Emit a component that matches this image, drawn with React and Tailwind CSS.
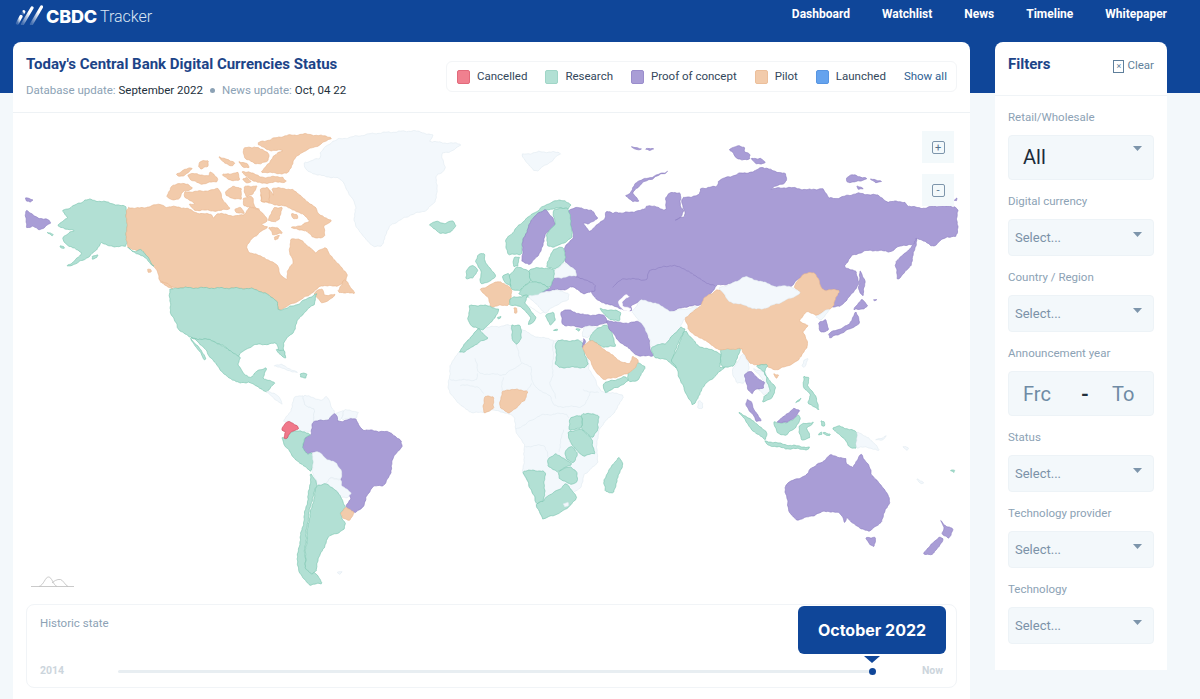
import React from 'react';

const font = { fontFamily: 'Roboto, "Noto Sans", sans-serif' };

const colors = {
  research: ['#b2e0d4', '#7cc6b0'],
  pilot: ['#f2cbab', '#e9b78f'],
  poc: ['#a99dd6', '#8e81c3'],
  none: ['#f3f8fc', '#e3ebf2'],
  cancelled: ['#f0788a', '#cf4a60'],
  white: ['#ffffff', '#ffffff'],
};

// every block uses the pixel grid of a 3x crop of the map, hence the offset per group
const america = [
  ['research', '320,262 270,248 200,238 150,262 125,272 145,295 112,315 140,330 165,330 128,352 140,375 190,400 135,443 190,420 225,395 245,368 265,378 320,380'],
  ['research', '118,380 130,378 132,385 120,385'],
  ['research', '80,335 100,345 95,348'],
  ['research', '215,410 232,406 230,415 215,418'],
  ['poc', '18,270 50,292 85,300 95,310 80,318 60,330 40,320 18,322'],
  ['poc', '18,233 38,238 30,245 18,245'],
  ['pilot', '320,262 365,265 395,258 425,252 440,262 470,260 510,268 530,278 575,285 580,295 590,280 625,285 650,288 672,285 690,262 720,270 745,300 725,315 745,320 700,350 680,380 690,400 730,410 770,435 785,470 800,478 805,450 820,430 810,400 810,355 845,362 875,385 885,400 915,380 950,430 982,460 975,485 945,500 905,495 880,515 850,535 800,560 775,572 770,545 740,520 690,505 450,503 440,495 420,478 410,450 385,415 350,390 320,380'],
  ['pilot', '970,480 985,490 1005,522 955,515'],
  ['pilot', '880,520 905,505 915,525 950,525 905,552 895,535'],
  ['pilot', '420,482 440,490 460,510 440,500'],
  ['pilot', '382,450 392,448 392,458 384,458'],
  ['research', '320,380 345,395 365,390 385,415 405,440 380,418 350,400'],
  ['pilot', '720,225 745,205 760,225 755,205 790,205 820,210 850,235 885,260 895,285 938,300 910,320 915,350 880,355 855,330 812,325 845,315 870,305 850,285 825,270 790,258 775,255 750,250 725,245'],
  ['pilot', '760,262 785,262 780,295 765,308 745,300'],
  ['pilot', '745,320 770,325 790,340 760,345'],
  ['pilot', '765,350 780,348 775,358 765,358'],
  ['pilot', '815,280 832,282 832,295 818,295'],
  ['pilot', '715,68 790,48 860,42 938,52 900,75 850,95 820,120 805,160 765,160 722,155 750,130 760,105 790,92 745,90 715,75'],
  ['pilot', '670,85 710,80 745,100 745,125 705,132 675,115'],
  ['pilot', '595,112 620,115 645,130 635,138 610,125'],
  ['pilot', '655,125 678,128 690,142 665,140'],
  ['pilot', '538,125 565,122 565,140 545,147 535,138'],
  ['pilot', '470,165 490,148 518,145 505,160 480,170'],
  ['pilot', '505,165 530,160 565,170 570,155 595,175 590,185 540,192 510,180'],
  ['pilot', '605,165 655,157 660,180 630,180'],
  ['pilot', '668,178 680,172 692,185 675,190'],
  ['pilot', '665,155 690,155 720,172 790,170 800,185 720,190 695,180'],
  ['pilot', '615,215 640,198 665,205 665,235 640,238 620,225'],
  ['pilot', '672,200 715,197 695,225 678,232'],
  ['pilot', '440,230 455,195 500,190 520,205 490,215 480,235 455,240'],
  ['pilot', '495,215 530,215 580,210 595,205 610,240 630,265 600,272 575,272 525,270 505,255 525,250 495,235'],
  ['pilot', '645,268 665,262 675,280 650,280'],
  ['pilot', '668,235 695,230 705,262 720,268 690,262 670,255'],
  ['pilot', '720,210 745,200 750,248 725,245'],
  ['none', '850,128 900,115 900,95 945,60 1060,40 1180,32 1240,45 1230,65 1325,72 1300,92 1265,100 1275,150 1250,165 1250,240 1220,270 1170,285 1110,315 1085,380 1060,378 1020,340 1000,300 1010,260 985,215 960,175 890,165 860,150'],
  ['research', '1228,312 1250,305 1270,310 1295,303 1310,320 1295,335 1260,342 1240,325'],
  ['research', '450,503 690,505 740,520 770,545 775,572 830,555 890,520 885,550 860,570 835,595 825,630 790,665 795,710 780,700 770,670 700,675 660,700 650,712 615,680 575,660 510,655 475,625 450,570'],
];

const south = [
  ['research', '-120,-36 -55,-30 -20,-10 30,21 25,40 40,70 65,85 80,60 110,55 100,85 135,100 125,110 110,125 85,115 60,95 30,100 0,85 -30,60 -60,20 -80,-10 -100,-30'],
  ['research', '-120,-36 -95,-10 -70,25 -75,28 -100,-5'],
  ['research', '140,0 165,0 165,25 150,15'],
  ['none', '130,45 160,45 205,68 170,60'],
  ['research', '210,72 230,70 230,85 212,83'],
  ['none', '110,120 140,135 160,165 135,150'],
  ['none', '160,215 185,175 195,140 220,135 225,165 255,180 250,215 245,245 215,245 185,215'],
  ['none', '220,135 275,150 290,140 315,190 290,210 250,215 255,180 225,165'],
  ['none', '315,190 340,180 335,205 320,215'],
  ['none', '340,180 385,185 380,205 335,207'],
  ['poc', '245,215 290,210 315,190 325,215 380,205 385,225 400,240 470,245 515,270 515,290 490,320 480,375 465,405 430,410 408,440 400,470 375,490 345,470 365,445 335,410 335,370 320,340 285,325 270,305 230,310 215,290 225,265 245,255'],
  ['research', '155,262 170,265 182,248 205,240 245,255 225,265 215,290 232,310 250,310 245,365 215,345 190,320 165,285'],
  ['cancelled', '165,222 180,215 200,225 205,235 180,248 170,265 160,262 165,245 155,238'],
  ['none', '248,310 270,305 285,325 320,340 335,370 335,390 300,380 290,402 262,405 248,365'],
  ['none', '290,402 300,382 335,392 335,410 365,430 355,445 335,440 315,420'],
  ['research', '243,368 262,405 245,450 232,520 225,600 225,650 255,670 280,700 240,705 215,680 200,640 210,570 225,490 238,420'],
  ['research', '262,405 290,402 315,420 335,440 345,470 330,490 345,520 340,540 295,560 285,590 265,620 260,660 245,675 225,650 228,590 235,520 250,450'],
  ['pilot', '345,470 375,490 360,510 340,505 332,490'],
  ['none', '320,665 338,665 330,672'],
  ['none', '685,5 660,50 655,125 690,165 730,190 800,180 855,200 855,240 885,290 878,365 905,420 925,480 940,505 1000,480 1030,430 1055,410 1060,375 1105,340 1100,310 1105,240 1150,190 1185,135 1115,125 1105,110 1075,52 1075,-28 978,-28 920,-40 845,-75 745,-65'],
  ['pilot', '762,140 790,140 792,178 765,188 760,170'],
  ['pilot', '815,125 835,118 895,122 885,150 860,170 835,192 810,170'],
  ['research', '1055,190 1105,195 1105,240 1085,262 1055,235'],
  ['research', '1020,205 1055,195 1055,235 1015,240'],
  ['research', '1015,245 1055,238 1085,265 1095,310 1060,318 1020,280'],
  ['research', '955,325 975,312 1005,325 1025,340 985,365 955,350'],
  ['research', '1005,300 1025,290 1045,310 1030,340 1010,325'],
  ['research', '985,365 1020,348 1042,365 1040,395 1020,405 990,385'],
  ['research', '878,362 945,362 942,455 920,460 905,420'],
  ['research', '942,455 948,440 985,420 1005,400 1030,425 1040,445 1000,485 940,508 925,480 920,460'],
  ['none', '998,462 1012,456 1015,465 1003,472'],
  ['research', '1168,320 1178,345 1160,395 1150,428 1125,425 1122,395 1135,360'],
  ['research', '1120,100 1190,80 1195,95 1125,128'],
  ['research', '1195,68 1215,35 1248,50 1225,90 1195,95'],
];

const borders = [
  '735,25 745,70 820,75 875,40 905,50 905,100 960,140 975,170 1060,170 1085,120',
  '660,90 740,90 745,70',
  '690,105 745,110 765,135',
  '815,125 820,75',
  '905,100 890,125',
  '970,-28 968,70 960,100 980,150',
  '855,240 930,195 1010,190 1020,205',
  '885,290 945,285 955,325',
  '1000,240 985,310',
  '1060,120 1110,130',
  '875,40 840,-70',
  '1230,-150 1270,-120 1330,-130',
  '1270,-120 1260,-70 1310,-20',
  '895,-130 930,-110 960,-120',
];

const eurasia = [
  ['poc', '385,240 420,232 460,245 475,268 445,280 430,280 445,305 470,285 495,265 500,245 520,250 530,245 545,250 610,240 620,225 680,240 675,205 695,185 720,190 722,225 730,240 720,265 705,272 735,255 725,205 780,195 780,175 830,170 835,150 900,130 945,125 960,110 1000,122 1035,130 1040,155 990,178 1040,172 1110,180 1150,175 1165,205 1190,205 1250,190 1310,195 1340,215 1395,215 1405,230 1460,235 1480,228 1552,230 1552,320 1520,320 1480,350 1430,322 1420,345 1385,345 1350,365 1290,360 1240,375 1210,410 1250,425 1255,460 1240,490 1200,530 1175,530 1200,480 1150,480 1115,430 1085,440 1050,470 1010,470 965,455 915,440 880,460 835,465 830,470 780,525 735,530 690,545 650,520 600,510 570,530 575,545 555,540 525,530 470,510 455,490 465,465 410,440 405,418 375,395 375,350 400,325 395,290'],
  ['white', '556,495 568,500 548,515 548,528 572,538 566,545 548,538 535,515'],
  ['poc', '1365,400 1420,345 1430,322 1425,360 1410,410 1375,450'],
  ['poc', '690,122 640,140 590,155 570,190 555,195 580,215 600,215 575,190 605,160'],
  ['none', '240,75 300,65 365,68 340,90 285,125'],
  ['poc', '575,52 605,55 590,60'],
  ['poc', '615,57 640,57 630,63'],
  ['poc', '868,60 895,45 915,55 910,65 930,75 930,90 885,85 880,70'],
  ['poc', '935,85 965,85 975,100 945,100'],
  ['poc', '1220,140 1240,135 1285,145 1240,158 1222,155'],
  ['poc', '1290,148 1325,152 1305,158'],
  ['poc', '1248,170 1270,175 1255,180'],
  ['poc', '1545,210 1552,205 1552,214'],
  ['poc', '340,445 408,437 465,465 465,485 430,490 395,470 370,480 330,480 285,500 305,480 330,475'],
  ['none', '345,420 375,400 405,418 408,437 340,445'],
  ['research', '195,330 215,310 260,265 300,235 335,215 370,210 395,225 385,235 340,235 320,240 290,250 265,290 250,330 243,372 205,375'],
  ['poc', '245,390 250,330 265,290 290,250 320,240 340,265 345,290 318,310 300,370 270,405'],
  ['research', '340,240 385,232 395,290 395,325 345,352 320,345 322,310 345,285'],
  ['research', '320,400 340,360 372,350 375,395 345,418 320,412'],
  ['research', '220,385 238,380 235,410 222,410'],
  ['research', '205,435 232,412 265,420 275,450 240,480 215,480'],
  ['research', '265,420 300,412 345,420 340,445 330,472 275,455'],
  ['research', '240,480 275,452 330,472 305,490 270,505 235,490'],
  ['research', '185,440 205,430 215,470 195,460'],
  ['pilot', '118,478 150,465 175,452 215,475 210,515 205,525 150,530 145,500'],
  ['pilot', '222,535 230,535 228,550 222,548'],
  ['research', '88,525 150,528 180,540 150,580 125,600 95,590 85,570'],
  ['research', '172,560 182,560 180,565 172,564'],
  ['research', '210,505 265,495 255,520 290,565 280,575 262,585 275,560 240,530 210,525'],
  ['research', '115,375 135,370 135,400 170,435 150,455 120,460 125,430 108,395'],
  ['research', '78,420 100,405 112,420 100,445 78,445'],
  ['none', '265,500 305,490 345,480 385,490 385,510 340,530 320,550 295,530'],
  ['research', '315,555 340,548 345,575 330,585'],
  ['research', '340,600 355,600 350,604'],
  ['research', '405,598 420,596 415,604'],
  ['research', '55,665 95,620 115,595 145,625 110,640 75,665'],
  ['research', '215,585 240,585 245,625 230,645 215,625'],
  ['research', '348,632 425,632 445,712 348,712'],
  ['poc', '360,545 385,540 430,555 490,555 505,580 420,592 370,585'],
  ['research', '478,535 540,545 540,575 505,565'],
  ['none', '430,590 480,590 445,622 428,618'],
  ['research', '445,630 470,595 505,585 530,650 490,650'],
  ['poc', '425,652 432,625 436,628 430,652'],
  ['pilot', '425,650 450,630 485,650 540,695 570,700 580,680 595,690 585,715 555,735 490,750 465,720'],
  ['poc', '500,570 545,580 600,575 620,600 630,650 640,680 590,675 545,640 510,600'],
  ['none', '575,545 600,510 650,520 690,545 775,530 740,560 720,590 680,640 635,650 620,600 600,575'],
  ['research', '635,650 680,640 720,590 735,600 700,670 710,715 680,690 640,680'],
  ['research', '735,600 770,645 840,670 845,690 838,715 860,705 790,770 765,820 755,822 725,760 710,715 695,690 710,660'],
  ['research', '840,650 905,655 880,710 845,710'],
  ['pilot', '735,565 780,530 790,505 835,478 870,515 960,540 1030,515 1085,490 1060,470 1090,432 1125,428 1150,480 1198,480 1180,530 1130,555 1100,545 1075,575 1105,585 1090,605 1105,650 1070,695 1010,720 965,705 925,700 905,655 840,660 790,630 745,600'],
  ['pilot', '1000,730 1018,735 1010,745'],
  ['none', '835,475 880,460 915,440 965,455 1010,470 1050,468 1085,490 1030,515 960,540 870,515'],
  ['none', '1125,560 1170,535 1145,570'],
  ['poc', '1138,575 1160,570 1165,600 1140,607'],
  ['poc', '1240,540 1265,505 1285,530 1262,538'],
  ['poc', '1250,545 1258,580 1225,600 1170,625 1165,610 1225,585'],
  ['poc', '1262,420 1275,460 1270,500 1255,475'],
  ['poc', '1300,508 1310,508 1305,512'],
];

const kazakh = '520,470 550,445 620,450 630,420 700,405 750,425 790,455 830,468';

const pacific = [
  ['none', '275,90 310,40 330,85 310,130 290,130'],
  ['none', '340,85 375,95 390,150 370,165 355,150 375,125'],
  ['research', '350,75 385,75 370,100 405,140 400,170 370,188 372,170 390,150 375,100'],
  ['poc', '315,100 335,95 350,115 375,125 370,145 345,150 335,160 325,145 315,120'],
  ['poc', '320,180 335,185 345,215 365,240 350,245 330,215 318,195'],
  ['none', '175,182 190,190 188,208 175,205'],
  ['none', '490,60 502,55 495,80 487,78'],
  ['research', '490,110 505,112 505,140 525,165 535,190 535,210 505,190 510,165 490,140'],
  ['research', '465,190 483,172 475,185'],
  ['research', '295,212 340,245 380,275 378,300 345,280'],
  ['research', '375,302 440,315 510,322 505,328 430,325 385,315'],
  ['research', '402,245 440,250 475,225 480,240 465,265 440,285 415,280 402,260'],
  ['poc', '410,245 440,225 460,205 480,213 472,225 440,248'],
  ['research', '480,255 525,245 500,265 510,295 485,300 478,280'],
  ['research', '545,242 555,245 552,260 545,258'],
  ['research', '535,280 545,278 545,284 536,285'],
  ['research', '550,278 572,282 570,287 552,284'],
  ['research', '575,265 600,258 650,275 650,325 630,320 600,285'],
  ['none', '650,275 690,295 720,335 680,320 650,325'],
  ['none', '705,300 742,288 730,298'],
  ['none', '790,318 808,325 800,332'],
  ['none', '830,415 852,430 845,434'],
  ['research', '932,393 945,390 942,398'],
  ['poc', '437,430 500,405 510,385 550,365 570,345 615,355 620,372 640,385 660,340 685,375 695,405 745,460 748,490 720,550 690,572 660,568 620,530 615,550 600,520 560,512 510,530 470,540 450,525 437,460'],
  ['poc', '678,592 708,592 700,618 688,615'],
  ['poc', '900,540 915,555 940,565 925,595 905,585 915,565'],
  ['poc', '895,590 910,598 880,645 850,640'],
];

// rough the straight edges up a little: same place, same shift, so neighbours stay joined
const warp = (x, y) => [
  x + 1.6 * Math.sin(y * 0.11 + x * 0.04) + 0.8 * Math.sin(y * 0.37 - x * 0.19),
  y + 1.6 * Math.sin(x * 0.13 - y * 0.05) + 0.8 * Math.sin(x * 0.41 + y * 0.17),
];

const toPath = (points, x0, y0, closed) => {
  const pts = points.split(' ').map((p) => p.split(',').map(Number));
  // take the corners off, barely
  const cut = [];
  const n = pts.length;
  pts.forEach((p, i) => {
    const next = pts[(i + 1) % n];
    if (!closed && i === n - 1) {
      cut.push(p);
      return;
    }
    if (!closed && i === 0) cut.push(p);
    cut.push([p[0] + (next[0] - p[0]) * 0.1, p[1] + (next[1] - p[1]) * 0.1]);
    cut.push([p[0] + (next[0] - p[0]) * 0.9, p[1] + (next[1] - p[1]) * 0.9]);
  });
  let d = '';
  cut.forEach((p, i) => {
    const next = i < cut.length - 1 ? cut[i + 1] : closed ? cut[0] : null;
    if (!next) return;
    const steps = Math.max(1, Math.round(Math.hypot(next[0] - p[0], next[1] - p[1]) / 4));
    for (let s = 0; s < steps; s++) {
      const px = p[0] + ((next[0] - p[0]) * s) / steps;
      const py = p[1] + ((next[1] - p[1]) * s) / steps;
      const [wx, wy] = warp(px + x0 * 3, py + y0 * 3);
      d += `${d ? 'L' : 'M'}${(wx - x0 * 3).toFixed(1)} ${(wy - y0 * 3).toFixed(1)}`;
    }
  });
  return closed ? `${d}Z` : d;
};

const Land = ({ shapes, x, y }) => (
  <g transform={`translate(${x} ${y}) scale(0.3333)`} strokeWidth="2" strokeLinejoin="round">
    {shapes.map(([kind, points], i) => (
      <path key={i} d={toPath(points, x, y, true)} fill={colors[kind][0]} stroke={colors[kind][1]} />
    ))}
  </g>
);

const Lines = ({ lines, x, y, stroke }) => (
  <g transform={`translate(${x} ${y}) scale(0.3333)`} fill="none" stroke={stroke} strokeWidth="2">
    {lines.map((points, i) => <path key={i} d={toPath(points, x, y, false)} />)}
  </g>
);

const WorldMap = () => (
  <svg viewBox="13 113 957 491" className="block w-[957px] h-[491px]">
    <Land shapes={america} x={20} y={120} />
    <Land shapes={south} x={230} y={350} />
    <Lines lines={borders} x={230} y={350} stroke="#e3ebf2" />
    <Land shapes={eurasia} x={440} y={130} />
    <Lines lines={[kazakh]} x={440} y={130} stroke="#8e81c3" />
    <Land shapes={pacific} x={640} y={340} />
    {/* small chart mark */}
    <g fill="none" stroke="#bdbdbd" strokeWidth="0.8">
      <path d="M31 586.5H74" />
      <path d="M39 586.5C44 585 45 577 48.5 577C52 577 53 585 57 586.5" />
      <path d="M52 583C54 581 57 579 60.5 579.5C63 580 65 585 68 586.5" />
    </g>
  </svg>
);

const Caret = () => (
  <svg viewBox="0 0 9 5" className="w-[9px] h-[5px]">
    <path d="M0 0H9L4.5 5Z" fill="#7d95ab" />
  </svg>
);

const LabelText = ({ children }) => (
  <div className="text-[11.5px] leading-[16px] text-[#8ca2b5] mb-[10px]">{children}</div>
);

const SelectBox = ({ label }) => (
  <div className="mb-[13px]">
    <LabelText>{label}</LabelText>
    <div className="h-[37px] bg-[#f3f8fb] border border-[#edf3f7] rounded flex justify-between pl-[6px] pr-[11px]">
      <span className="text-[13px] leading-[36px] text-[#7b92a8]">Select...</span>
      <span className="mt-[12px]"><Caret /></span>
    </div>
  </div>
);

const legend = [
  ['Cancelled', 'bg-[#f0808f] border-[#e26a7b]'],
  ['Research', 'bg-[#b2e0d4] border-[#a0d6c7]'],
  ['Proof of concept', 'bg-[#a99dd6] border-[#9a8dcc]'],
  ['Pilot', 'bg-[#f2cbab] border-[#ecbf9b]'],
  ['Launched', 'bg-[#65a3ee] border-[#5795e2]'],
];

const navLinks = ['Dashboard', 'Watchlist', 'News', 'Timeline', 'Whitepaper'];

const App = () => {
  return (
    <div
      style={font}
      className="h-[699px] overflow-hidden bg-[linear-gradient(#0f4699_93px,#f3f8fb_93px)]"
    >
      <header className="h-[42px] pl-[15px] pr-[33px] flex justify-between">
        <div className="flex items-start pt-[5px]">
          <svg viewBox="0 0 28 20" className="w-[28px] h-[20px] mr-[3px]">
            <defs>
              <linearGradient id="slash" x1="0" y1="1" x2="1" y2="0">
                <stop offset="0" stopColor="#ffffff" stopOpacity="0.2" />
                <stop offset="0.7" stopColor="#ffffff" />
              </linearGradient>
            </defs>
            <g stroke="url(#slash)" strokeWidth="3.2" strokeLinecap="round" fill="none">
              <path d="M2.5 18L6 11.5" />
              <path d="M8 8L8.8 6.6" />
              <path d="M7.5 19L17 3" />
              <path d="M16.5 19L26.5 2" />
            </g>
          </svg>
          <span
            style={{ fontFamily: 'Inter, sans-serif' }}
            className="mt-[2px] text-[18px] leading-[20px] font-extrabold text-white tracking-[-0.2px]"
          >
            CBDC
          </span>
          <span className="mt-[2px] text-[16px] leading-[20px] font-light text-[#dbe6f4] ml-[3px]">Tracker</span>
        </div>
        <nav className="flex gap-[32px] pt-[6px]">
          {navLinks.map((link) => (
            <a key={link} className="text-[12px] leading-[16px] font-bold text-white">{link}</a>
          ))}
        </nav>
      </header>

      <div className="flex items-start pl-[13px] gap-[25px]">
        <main className="w-[957px] h-[657px] bg-white rounded-t-lg">
          <div className="h-[71px] border-b border-[#eef2f5] pl-[13px] pr-[13px] flex justify-between">
            <div>
              <h1 className="mt-[13px] text-[15px] leading-[18px] font-bold text-[#1c4488]">
                Today's Central Bank Digital Currencies Status
              </h1>
              <p className="mt-[9px] text-[11.5px] leading-[16px] text-[#8ca2b5] flex items-center">
                Database update:&nbsp;<span className="text-[#22303c]">September 2022</span>
                <span className="w-[5px] h-[5px] rounded-full bg-[#8ca2b5] mx-[7px]" />
                News update:&nbsp;<span className="text-[#22303c]">Oct, 04 22</span>
              </p>
            </div>
            <div className="mt-[19px] h-[31px] w-[511px] border border-[#f3f5f7] rounded-md flex items-center justify-between pl-[10px] pr-[9px] pt-px">
              {legend.map(([name, swatch]) => (
                <div key={name} className="flex items-center gap-[7px]">
                  <span className={`w-[13px] h-[14px] rounded-[2px] border ${swatch}`} />
                  <span className="text-[11.5px] text-[#33475b]">{name}</span>
                </div>
              ))}
              <a className="text-[11.5px] text-[#2f5f93]">Show all</a>
            </div>
          </div>

          <div className="relative">
            <WorldMap />
            <div className="absolute top-[18px] left-[909px] flex flex-col gap-[11px]">
              {['+', '-'].map((sign) => (
                <button key={sign} className="w-[32px] h-[32px] bg-[#f3f9fb] flex items-center justify-center">
                  <span className="w-[13px] h-[13px] border border-[#7d95ab] rounded-[2px] text-[11px] leading-[11px] text-[#56728c] text-center">
                    {sign}
                  </span>
                </button>
              ))}
            </div>
          </div>

          <div className="relative mx-[13px] h-[84px] border border-[#f1f4f7] rounded-lg px-[13px]">
            <div className="mt-[10px] text-[11.5px] leading-[16px] text-[#8ca2b5]">Historic state</div>
            <div className="mt-[32px] flex items-center">
              <span className="w-[78px] text-[10.5px] font-bold text-[#ccd5dc]">2014</span>
              <div className="relative w-[754px] h-[3px] mt-[2px] rounded bg-[#e8eef2]">
                <span className="absolute -right-[6px] -top-[2px] w-[7px] h-[7px] rounded-full bg-[#0f4699]" />
              </div>
              <span className="ml-[52px] text-[10.5px] font-bold text-[#ccd5dc]">Now</span>
            </div>
            <div className="absolute left-[771px] top-[1px] w-[148px] h-[48px] rounded-md bg-[#0f4699] flex items-center justify-center">
              <span style={{ fontFamily: 'Inter, sans-serif' }} className="text-[16px] font-bold text-white">
                October 2022
              </span>
              <span className="absolute left-[66px] top-[50px] border-x-[8px] border-x-transparent border-t-[7px] border-t-[#0f4699]" />
            </div>
          </div>
        </main>

        <aside className="w-[172px] h-[628px] bg-white rounded-t-lg">
          <div className="h-[54px] flex justify-between pl-[13px] pr-[13px] border-b border-[#f0f4f7]">
            <h2 className="mt-[13px] text-[15px] leading-[18px] font-bold text-[#1c4488]">Filters</h2>
            <div className="mt-[17px] h-[14px] flex items-center gap-[3px]">
              <span className="w-[11px] h-[13px] border border-[#5f7f9b] text-[9px] leading-[10px] text-center text-[#5f7f9b]">×</span>
              <span className="text-[11.5px] text-[#5f7f9b]">Clear</span>
            </div>
          </div>
          <div className="pt-[13px] pl-[13px] pr-[13px]">
            <div className="mb-[13px]">
              <LabelText>Retail/Wholesale</LabelText>
              <div className="h-[45px] bg-[#f3f8fb] border border-[#edf3f7] rounded flex justify-between pl-[14px] pr-[11px]">
                <span className="text-[20px] leading-[43px] text-[#1c2b39]">All</span>
                <span className="mt-[10px]"><Caret /></span>
              </div>
            </div>
            <SelectBox label="Digital currency" />
            <SelectBox label="Country / Region" />
            <div className="mb-[13px]">
              <LabelText>Announcement year</LabelText>
              <div className="h-[45px] bg-[#f3f8fb] border border-[#edf3f7] rounded flex items-center text-[20px] text-[#6f8ba5]">
                <span className="w-[58px] pl-[14px] overflow-hidden">Frc</span>
                <span className="w-[27px] pl-[14px] font-bold text-[#22303c]">-</span>
                <span className="ml-[18px]">To</span>
              </div>
            </div>
            <SelectBox label="Status" />
            <SelectBox label="Technology provider" />
            <SelectBox label="Technology" />
          </div>
        </aside>
      </div>
    </div>
  );
};

export default App;
